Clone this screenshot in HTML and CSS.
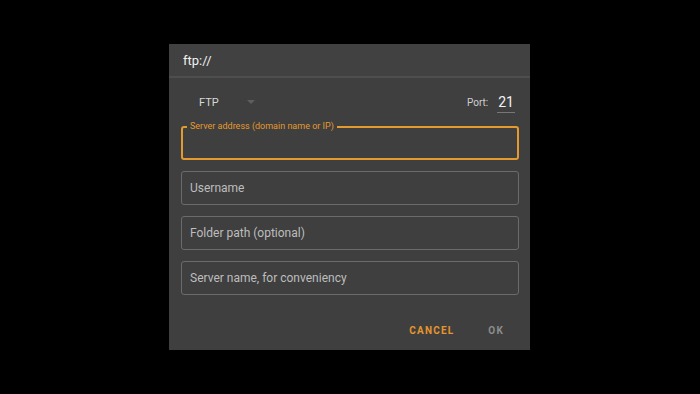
FILE: index.html
```html
<!DOCTYPE html>
<html>
<head>
<meta charset="utf-8">
<link rel="stylesheet" href="styles.css">
</head>
<body>
<div class="dialog">
  <div class="dialog-header">ftp://</div>
  <div class="dialog-body">
    <div class="proto-row">
      <div class="proto-select">
        <span class="proto-name">FTP</span>
        <svg class="caret" width="8" height="5" viewBox="0 0 8 5"><polygon points="0,0 8,0 4,4" fill="#5e5e5e"/></svg>
      </div>
      <div class="port">
        <span class="port-label">Port:</span>
        <span class="port-value">21</span>
      </div>
    </div>
    <div class="field field-active">
      <span class="field-label">Server address (domain name or IP)</span>
    </div>
    <div class="field"><span class="placeholder">Username</span></div>
    <div class="field"><span class="placeholder">Folder path (optional)</span></div>
    <div class="field"><span class="placeholder">Server name, for conveniency</span></div>
  </div>
  <div class="dialog-actions">
    <span class="btn btn-cancel">CANCEL</span>
    <span class="btn btn-ok">OK</span>
  </div>
</div>
</body>
</html>
```
FILE: styles.css
```css
html, body {
  margin: 0;
  padding: 0;
  background: #000;
  width: 700px;
  height: 394px;
  overflow: hidden;
  font-family: Roboto, "Liberation Sans", sans-serif;
}
body {
  padding-top: 44px;
  box-sizing: border-box;
}
.dialog {
  margin-left: 169px;
  width: 361px;
  height: 306px;
  background: #3f3f3f;
  display: flex;
  flex-direction: column;
}
.dialog-header {
  height: 34px;
  box-sizing: border-box;
  padding-left: 14px;
  display: flex;
  align-items: center;
  padding-top: 0;
  color: #f0f0f0;
  font-size: 13px;
  background: #414141;
  border-bottom: 2px solid #4e4e4e;
}
.dialog-body {
  padding: 0 11px 0 12px;
  display: flex;
  flex-direction: column;
}
.proto-row {
  height: 48px;
  display: flex;
  align-items: center;
  justify-content: space-between;
}
.proto-select {
  display: flex;
  align-items: center;
  padding-left: 18px;
  gap: 28px;
}
.proto-name {
  color: #d8d8d8;
  font-size: 11px;
}
.caret {
  display: block;
  margin-top: 1px;
}
.port {
  display: flex;
  align-items: center;
  gap: 9px;
  padding-right: 4px;
}
.port-label {
  color: #cfcfcf;
  font-size: 10px;
}
.port-value {
  color: #f2f2f2;
  font-size: 14px;
  border-bottom: 1px solid #777;
  padding: 0 1px 2px 1px;
  margin-top: 3px;
}
.field {
  position: relative;
  height: 34px;
  box-sizing: border-box;
  border: 1px solid #6b6b6b;
  border-radius: 3px;
  margin-top: 11px;
  display: flex;
  align-items: center;
  padding-left: 8px;
}
.field-active {
  margin-top: 0;
  height: 34px;
  border: 2px solid #e39a2e;
}
.field-label {
  position: absolute;
  left: 4px;
  top: -8px;
  padding: 0 3px;
  background: #3f3f3f;
  color: #e39a2e;
  font-size: 9px;
  line-height: 12px;
}
.placeholder {
  color: #bdbdbd;
  font-size: 12px;
}
.dialog-actions {
  display: flex;
  justify-content: flex-end;
  align-items: center;
  margin-top: auto;
  height: 40px;
  padding-right: 26px;
  gap: 34px;
}
.btn {
  font-size: 10px;
  font-weight: bold;
  letter-spacing: 1.2px;
}
.btn-cancel {
  color: #e3962e;
}
.btn-ok {
  color: #8c8c8c;
}
```
